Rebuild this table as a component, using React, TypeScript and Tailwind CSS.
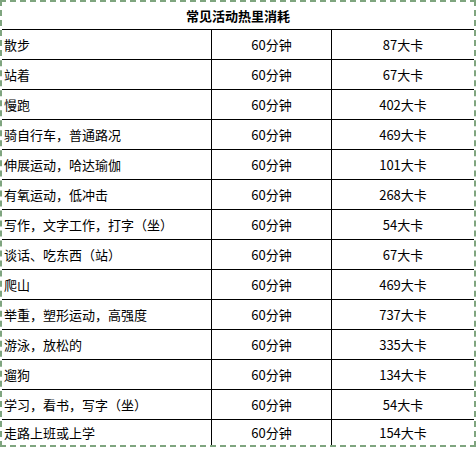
import React from "react";

const rows: [string, string, string][] = [
  ["散步", "60分钟", "87大卡"],
  ["站着", "60分钟", "67大卡"],
  ["慢跑", "60分钟", "402大卡"],
  ["骑自行车，普通路况", "60分钟", "469大卡"],
  ["伸展运动，哈达瑜伽", "60分钟", "101大卡"],
  ["有氧运动，低冲击", "60分钟", "268大卡"],
  ["写作，文字工作，打字（坐）", "60分钟", "54大卡"],
  ["谈话、吃东西（站）", "60分钟", "67大卡"],
  ["爬山", "60分钟", "469大卡"],
  ["举重，塑形运动，高强度", "60分钟", "737大卡"],
  ["游泳，放松的", "60分钟", "335大卡"],
  ["遛狗", "60分钟", "134大卡"],
  ["学习，看书，写字（坐）", "60分钟", "54大卡"],
  ["走路上班或上学", "60分钟", "154大卡"],
];

export default function App() {
  return (
    <div className="w-[476px] h-[450px] bg-white">
      <div
        className="w-[476px] h-[447px] border-2 border-dashed border-[#7fa57f] flex flex-col text-black text-[13px]"
        style={{ fontFamily: '"Noto Sans CJK SC", "Noto Sans", sans-serif' }}
      >
        <div className="h-[27px] flex items-center justify-center font-bold shrink-0">
          常见活动热里消耗
        </div>
        {rows.map((r, i) => (
          <div
            key={i}
            className={
              "flex border-t border-black shrink-0 " +
              (i === rows.length - 1 ? "flex-1" : "h-[30px]")
            }
          >
            <div className="w-[209px] flex items-center pl-[2px]">{r[0]}</div>
            <div className="w-[120px] border-l border-black flex items-center justify-center">
              {r[1]}
            </div>
            <div className="flex-1 border-l border-black flex items-center justify-center">
              {r[2]}
            </div>
          </div>
        ))}
      </div>
    </div>
  );
}
